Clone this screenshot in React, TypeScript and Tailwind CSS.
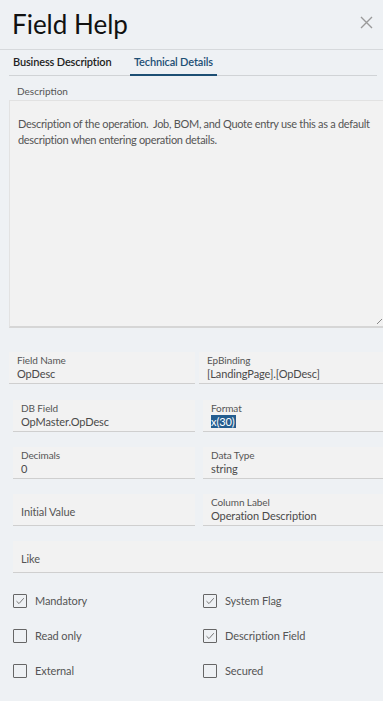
import React from 'react';

const font = { fontFamily: 'Lato, "Noto Sans", sans-serif' };

function Field({ label, value, highlight }: { label: string; value?: string; highlight?: boolean }) {
  return (
    <div className="h-[32px] bg-[#f2f2f2] border-b border-[#cfcfcf] pl-[8px] flex flex-col justify-center tracking-[-0.1px]">
      {value === undefined ? (
        <span className="text-[11px] text-[#555] leading-[14px] mt-[4px]">{label}</span>
      ) : (
        <>
          <span className="text-[10px] text-[#555] leading-[13px]">{label}</span>
          <span className="text-[11px] text-[#4a4a4a] leading-[14px]">
            {highlight ? <span className="bg-[#245d8f] text-white pr-px">{value}</span> : value}
          </span>
        </>
      )}
    </div>
  );
}

function Check({ label, checked }: { label: string; checked?: boolean }) {
  return (
    <div className="flex items-center h-[14px]">
      <div className="w-[14px] h-[14px] border border-[#666] rounded-[1px] flex items-center justify-center">
        {checked && (
          <svg width="10" height="10" viewBox="0 0 10 10">
            <path d="M1.5 5.2 L4 7.6 L8.8 2.2" fill="none" stroke="#777" strokeWidth="1" />
          </svg>
        )}
      </div>
      <span className="ml-[8px] text-[11px] text-[#555] tracking-[-0.1px]">{label}</span>
    </div>
  );
}

export default function App() {
  return (
    <div className="w-[383px] h-[701px] bg-[#eef1f4] overflow-hidden" style={font}>
      {/* Header */}
      <div className="h-[50px] border-b border-[#d6d9dc] flex items-center justify-between pl-[12px] pr-[10px]">
        <h1 className="text-[26px] text-[#111] leading-none -mt-[1px]">Field Help</h1>
        <svg width="13" height="13" viewBox="0 0 13 13" className="-mt-[4px]">
          <path d="M1 1 L12 12 M12 1 L1 12" stroke="#9a9a9a" strokeWidth="1.4" />
        </svg>
      </div>

      {/* Tabs */}
      <div className="mx-[9px] w-[368px] h-[26px] flex border-b border-[#d0d3d6] tracking-[-0.15px]">
        <div className="w-[121px] pl-[4px] flex items-center text-[11px] font-semibold text-[#222]">
          Business Description
        </div>
        <div className="px-[4px] flex items-center text-[11px] font-semibold text-[#1d4f74] border-b-2 border-[#1d4f74] -mb-px">
          Technical Details
        </div>
      </div>

      {/* Description */}
      <div className="pl-[9px] pt-[9px]">
        <div className="pl-[8px] text-[10px] text-[#555] leading-[13px]">Description</div>
        <div className="mt-[2px] h-[228px] bg-[#f2f2f2] border-l border-t border-[#e2e2e2] border-b-2 border-b-[#d6d6d6] pl-[8px] pt-[15px] relative">
          <p className="text-[11px] leading-[16px] text-[#555] tracking-[-0.3px]">
            Description of the operation.&nbsp; Job, BOM, and Quote entry use this as a default description when entering operation details.
          </p>
          <svg width="5" height="5" viewBox="0 0 5 5" className="absolute right-[1px] bottom-[2px]">
            <path d="M0 5 L5 0" stroke="#888" strokeWidth="1" />
          </svg>
        </div>
      </div>

      {/* Fields */}
      <div className="pl-[9px] mt-[24px] grid grid-cols-[186px_1fr] gap-x-[4px]">
        <Field label="Field Name" value="OpDesc" />
        <Field label="EpBinding" value="[LandingPage].[OpDesc]" />
      </div>
      <div className="pl-[13px] mt-[16px] grid grid-cols-[182px_1fr] gap-x-[8px] gap-y-[15px]">
        <Field label="DB Field" value="OpMaster.OpDesc" />
        <Field label="Format" value="x(30)" highlight />
        <Field label="Decimals" value="0" />
        <Field label="Data Type" value="string" />
        <Field label="Initial Value" />
        <Field label="Column Label" value="Operation Description" />
        <div className="col-span-2">
          <Field label="Like" />
        </div>
      </div>

      {/* Checkboxes */}
      <div className="pl-[13px] mt-[21px] grid grid-cols-[190px_1fr] gap-y-[21px]">
        <Check label="Mandatory" checked />
        <Check label="System Flag" checked />
        <Check label="Read only" />
        <Check label="Description Field" checked />
        <Check label="External" />
        <Check label="Secured" />
      </div>
    </div>
  );
}
